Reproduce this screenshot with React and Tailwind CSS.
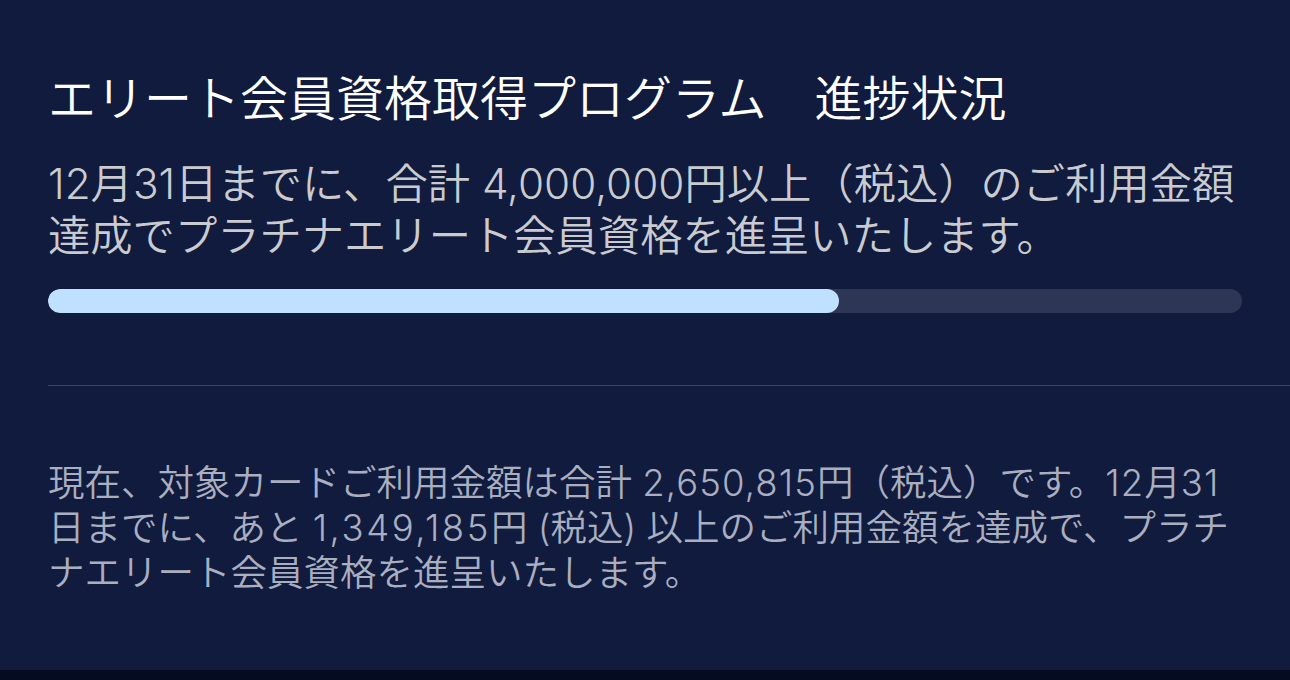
export default function App() {
  const total = 4000000
  const current = 2650815
  const pct = (current / total) * 100

  return (
    <div
      className="w-[1290px] h-[680px] flex flex-col bg-[#101b3d] overflow-hidden font-[350]"
      style={{ fontFamily: 'Inter, "Noto Sans CJK JP", "Noto Sans", sans-serif' }}
    >
      <section className="h-[670px] pt-[71px] pl-[48px]">
        {/* heading */}
        <h1 className="text-[48px] leading-[56px] text-white font-[350] whitespace-nowrap">
          エリート会員資格取得プログラム　進捗状況
        </h1>
        <p className="mt-[31px] text-[42.3px] leading-[52px] text-[#cacbd0] whitespace-nowrap">
          12月31日までに、合計 4,000,000円以上（税込）のご利用金額
          <br />
          達成でプラチナエリート会員資格を進呈いたします。
        </p>

        {/* progress */}
        <div className="mt-[27px] mr-[48px] h-[24px] rounded-full bg-[#2d3654] overflow-hidden">
          <div className="h-full rounded-full bg-[#bfe0ff]" style={{ width: `${pct}%` }} />
        </div>

        <div className="mt-[72px] h-px bg-[#3b4565]" />

        <p className="mt-[75px] text-[36.5px] leading-[45px] text-[#a9aec0] whitespace-nowrap">
          現在、対象カードご利用金額は合計 <span className="tracking-[0.03em]">2,650,815</span>円（税込）です。<span className="tracking-[0.03em]">12</span>月<span className="tracking-[0.03em]">31</span>
          <br />
          日までに、あと <span className="tracking-[0.07em]">1,349,185</span>円 (税込) 以上のご利用金額を達成で、プラチ
          <br />
          ナエリート会員資格を進呈いたします。
        </p>
      </section>
      <div className="h-[10px] bg-[#050b20]" />
    </div>
  )
}
